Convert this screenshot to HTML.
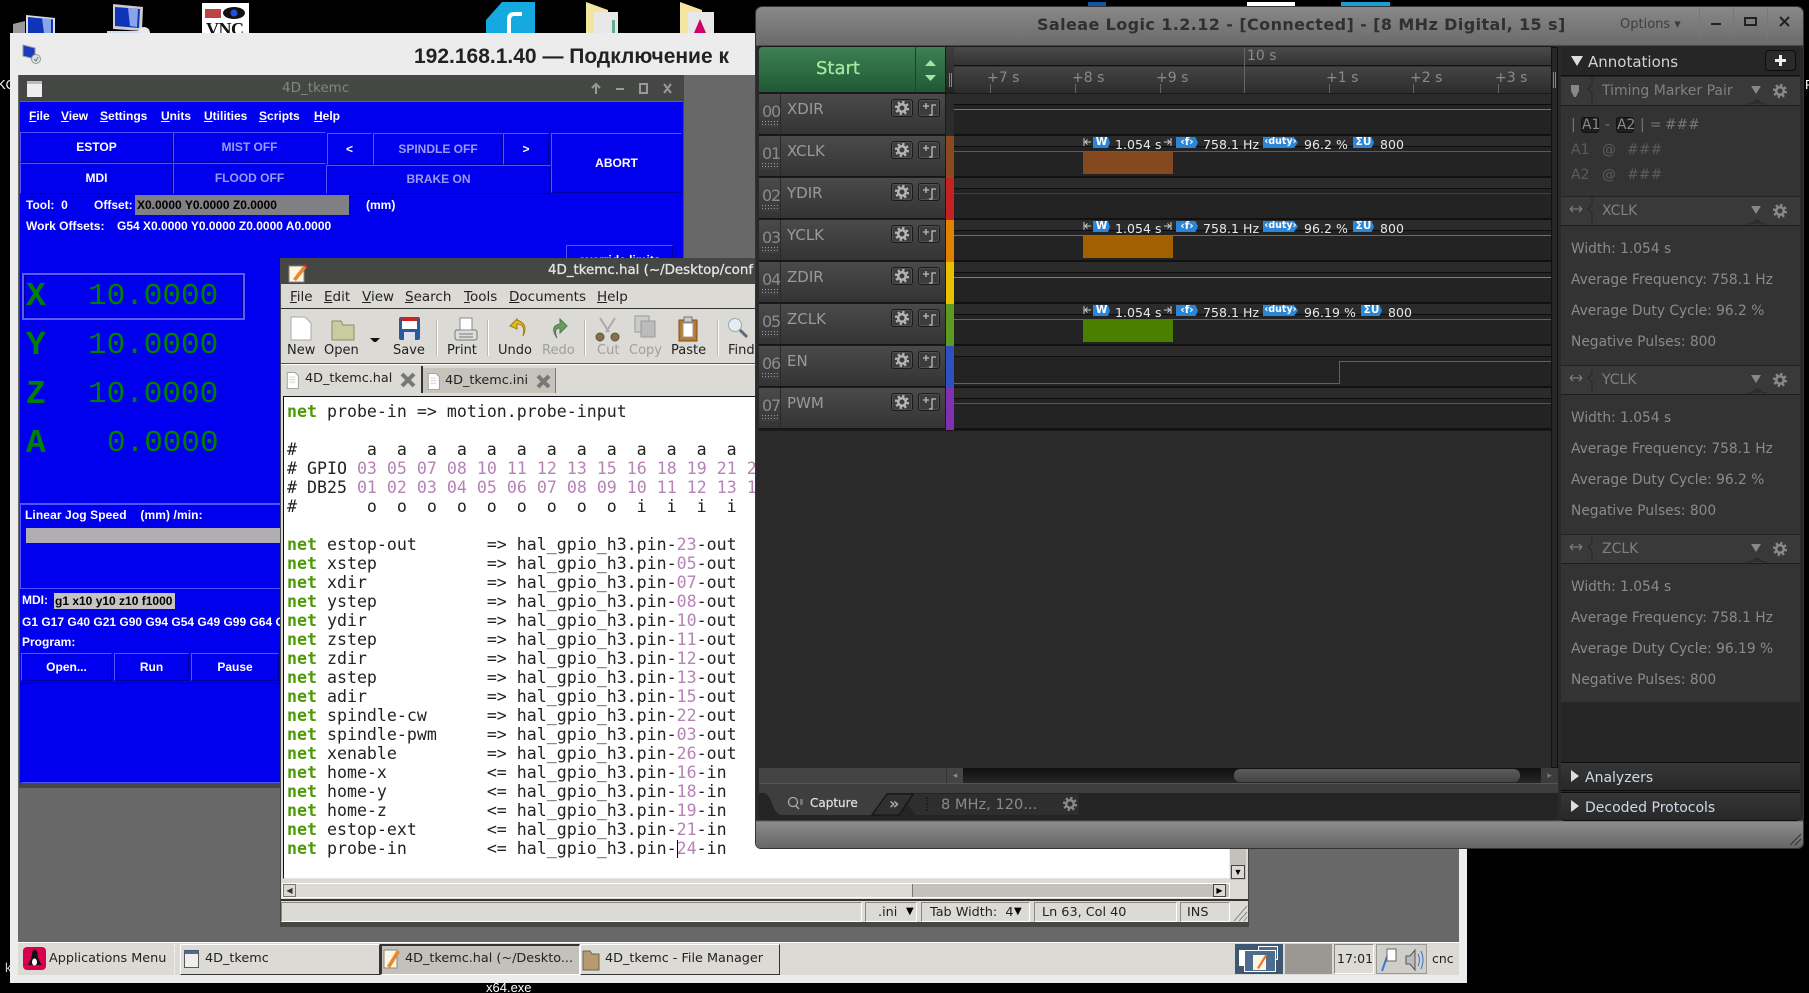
<!DOCTYPE html>
<html><head><meta charset="utf-8"><title>Saleae Logic</title>
<style>
html,body{margin:0;padding:0;background:#000;width:1809px;height:993px;overflow:hidden}
div,span,pre,svg,b,i{position:absolute;box-sizing:border-box}
#r{left:0;top:0;width:1809px;height:993px;overflow:hidden;font-family:"Liberation Sans",sans-serif}
#r span{white-space:nowrap}
u{position:static}
.bt{background:#0000ee;border:1px solid;border-color:#5454ff #00009c #00009c #5454ff;color:#fff;font:bold 12px "Liberation Sans",sans-serif;text-align:center}
.gy{color:#9a9af5!important}
.w{color:#fff;font:bold 12px "Liberation Sans",sans-serif}
.dro{font:31px/36px "Liberation Mono",monospace;color:#008000;white-space:pre!important}
.drb{font-weight:bold;font-size:33px}
.gm{font:13.5px "DejaVu Sans",sans-serif;color:#222}
.tl{font:13px "DejaVu Sans",sans-serif;color:#222;top:343px}
.dis{color:#a09e99}
.sep{width:2px;background:#bdbab4;border-right:1px solid #fff;top:320px;height:36px}
#code{left:287px;top:402px;margin:0;font:16.6px/19px "DejaVu Sans Mono",monospace;color:#222;white-space:pre}
#code b{position:static;color:#4e9a06;font-weight:bold}
#code i{position:static;font-style:normal;color:#b583b5}
.sb{background:#dcdad5;border:1px solid;border-color:#8a8984 #fff #fff #8a8984;top:902px;height:20px}
.sb2{font:12.8px "DejaVu Sans",sans-serif;color:#222;top:905px}
.tb{top:944px;height:31px;background:#dcdad5;border:1px solid;border-color:#fff #333 #333 #fff}
.ts{font:12.8px "DejaVu Sans",sans-serif;color:#222;top:951px}
.ch{left:759px;width:186px;height:41px;background:linear-gradient(#4a4a4a,#343434);border-bottom:1px solid #151515}
.ch:before{content:"";position:absolute;left:21px;top:0;bottom:0;width:1px;background:#2a2a2a}
.ch .n{left:3px;top:8px;font:16px "DejaVu Sans",sans-serif;color:#8b8b8b;letter-spacing:-1.2px}
.ch .nm{left:28px;top:6px;font:15px "DejaVu Sans",sans-serif;color:#9a9a9a}
.ch .dt{left:3px;top:27px;width:16px;height:6px;background:repeating-linear-gradient(90deg,transparent 0 1px,#3e3e3e 1px 3px),repeating-linear-gradient(#999 0 1px,#3e3e3e 1px 3px)}
.ch .b1,.ch .b2{top:5px;height:18px;width:22px;background:#3c3c3c;border:1px solid #1a1a1a;border-radius:3px;box-shadow:inset 0 0 0 1px #505050}
.ch .b1{left:132px;color:#b4b4b4}.ch .b2{left:159px}
.ch .b1 svg,.ch .b2 svg{left:2px;top:0}
.st{left:946px;width:8px;height:42px}
.wv{left:954px;width:597px;height:42px;background:#232323;border-bottom:2px solid #111}
.wv .t{left:0;top:0;width:100%;height:11px;background:#2b2b2b;border-bottom:1px solid #0e0e0e}
.wv .l{left:0;top:15px;width:100%;height:1px}
.tg{font:bold 10.5px/10px "DejaVu Sans",sans-serif;color:#fff;background:#2a86d8;height:11px;text-align:center;clip-path:polygon(0 0,88% 0,100% 50%,88% 100%,0 100%)}
.at{font:12.5px "DejaVu Sans",sans-serif;color:#e8e8e8;letter-spacing:.05px}
.rl{font:14px "DejaVu Sans",sans-serif;color:#8a8a8a;top:70px}
.tk{width:1px;background:#666;top:84px;height:9px}
.sh{left:1561px;width:239px;height:30px;background:#393939;border-bottom:1px solid #1c1c1c;border-top:1px solid #222}
.sh .h{left:41px;top:6px;font:14px "DejaVu Sans",sans-serif;color:#808080}
.sh .dn{left:190px;top:9px;width:0;height:0;border:5px solid transparent;border-top:8px solid #888;border-bottom:0}
.pt{font:13.8px "DejaVu Sans",sans-serif;color:#8a8a8a;left:1571px}
.pd{font:14px "DejaVu Sans",sans-serif;color:#5c5c5c}
</style></head><body><div id="r">
<svg width="0" height="0" style="left:0;top:0"><defs>
<g id="gear"><circle cx="8" cy="8" r="3.8" fill="none" stroke="currentColor" stroke-width="2.6"/><circle cx="8" cy="8" r="6" fill="none" stroke="currentColor" stroke-width="2.2" stroke-dasharray="2.36 2.35"/></g>
<g id="stp"><path d="M2 6h6M5 3v6M8 15h3V5h4" fill="none" stroke="#bbb" stroke-width="1.3"/></g>
<g id="doc"><path d="M1.500 .5h9l4 4v15h-13z" fill="#fff" stroke="#999"/><path d="M4 6h7M4 9h7M4 12h7" stroke="#ccc"/></g>
<g id="hd"><path d="M31 0V9L27 13 31 17V28" fill="none" stroke="#262626"/><path d="M186 28h4l6-4 6 4h4" fill="#303030" stroke="#262626"/></g>
<g id="dbl"><path d="M1 7h12M1 7l3-3M1 7l3 3M13 7l-3-3M13 7l-3 3" fill="none" stroke="#888"/></g>
<g id="wl"><path d="M1 2v8M8 6H2M4.500 3.500L2 6l2.500 2.500" fill="none" stroke="#ccc"/></g>
<g id="wr"><path d="M7 2v8M0 6h6M3.500 3.500L6 6 3.500 8.500" fill="none" stroke="#ccc"/></g>
</defs></svg>

<!-- desktop icons -->
<svg style="left:0;top:0" width="800" height="34">
<path d="M13 24l12-3v12H13z" fill="#999"/><path d="M26 15l29 3v15H26z" fill="#ddd"/><path d="M28 17l25 2.500V33H28z" fill="#1034b8"/><path d="M42 18l9 1v14h-7z" fill="#8aa4e8"/>
<path d="M107 31h36v2h-36z" fill="#cde"/><path d="M113 4l30 3-1 24-29-2z" fill="#ccc"/><path d="M115 7l25 2-1 19-24-2z" fill="#1034b8"/><path d="M128 8l10 1-1 18-7-1z" fill="#8aa4e8"/><circle cx="144" cy="33" r="6" fill="#e8e8e8"/>
<rect x="202" y="3" width="47" height="31" fill="#fff"/><ellipse cx="234" cy="13" rx="11" ry="6" fill="#111"/><circle cx="234" cy="13" r="3.500" fill="#2050e0"/><rect x="205" y="9" width="16" height="9" fill="#b44"/>
<path d="M502 2h33v31h-49V20z" fill="#16a9e0"/><path d="M522 14h-8q-5 0-5 6v13" fill="none" stroke="#fff" stroke-width="4"/>
<path d="M586 2l22 8v23h-22z" fill="#f3e4a0"/><path d="M594 12h24v21h-24z" fill="#e8e8e8"/><path d="M612 20h3v13h-3z" fill="#6a9"/>
<path d="M680 2l22 8v23h-22z" fill="#f3e4a0"/><path d="M688 12h26v21h-26z" fill="#e8e8e8"/><path d="M694 33l6-14 6 14z" fill="#c06"/>
</svg>
<span style="left:206px;top:19px;font:bold 18px 'Liberation Serif',serif;color:#111;letter-spacing:-.5px">VNC</span>
<div style="left:1247px;top:2px;width:48px;height:6px;background:#fff"></div>
<div style="left:1341px;top:2px;width:49px;height:6px;background:#16a0d8"></div>
<div style="left:1088px;top:2px;width:18px;height:6px;background:#15a"></div>
<span style="left:-3px;top:77px;font-size:13px;color:#fff">KO</span>
<span style="left:5px;top:960px;font-size:13px;color:#ccd">k</span>
<span style="left:486px;top:980px;font-size:13px;color:#fff">x64.exe</span>
<span style="left:1805px;top:77px;font-size:13px;color:#fff">F</span>

<!-- VNC window -->
<div style="left:10px;top:33px;width:1457px;height:950px;background:#ececec"></div>
<div style="left:0;top:0;width:0;height:0"></div>
<svg style="left:22px;top:44px" width="20" height="22"><path d="M1 1l12 3v11L1 12z" fill="#1c3cc0" stroke="#999"/><circle cx="14" cy="15" r="4.500" fill="#dde" stroke="#999"/><path d="M12 15l2 2 2-4" stroke="#3a3" fill="none"/></svg>
<span style="left:414px;top:45px;font:bold 21px 'Liberation Sans',sans-serif;color:#222">192.168.1.40 — Подключение к</span>
<div style="left:18px;top:75px;width:1441px;height:868px;background:#686868"></div>

<!-- 4D_tkemc -->
<div style="left:19px;top:75px;width:665px;height:713px;background:#454745"></div>
<div style="left:27px;top:81px;width:15px;height:16px;background:#eee;border-top:3px solid #bbb"></div>
<span style="left:282px;top:80px;font:13.5px 'DejaVu Sans',sans-serif;color:#848684">4D_tkemc</span>
<svg style="left:585px;top:80px" width="92" height="16" stroke="#999" fill="none" stroke-width="2"><path d="M11 14V4M7 8l4-4 4 4M31 9h8M55 4h7v9h-7zM79 4l7 9M86 4l-7 9"/></svg>
<div style="left:20px;top:101px;width:663px;height:682px;background:#0000ee;border-top:1px solid #5454ff"></div>
<span class="w" style="left:29px;top:109px"><u>F</u>ile</span><span class="w" style="left:61px;top:109px"><u>V</u>iew</span><span class="w" style="left:100px;top:109px"><u>S</u>ettings</span><span class="w" style="left:161px;top:109px"><u>U</u>nits</span><span class="w" style="left:204px;top:109px"><u>U</u>tilities</span><span class="w" style="left:259px;top:109px"><u>S</u>cripts</span><span class="w" style="left:314px;top:109px"><u>H</u>elp</span>
<div class="bt" style="left:20px;top:132px;width:153px;height:31px;line-height:29px">ESTOP</div>
<div class="bt gy" style="left:173px;top:132px;width:153px;height:31px;line-height:29px">MIST OFF</div>
<div class="bt" style="left:327px;top:133px;width:45px;height:32px;line-height:30px">&lt;</div>
<div class="bt gy" style="left:373px;top:133px;width:130px;height:32px;line-height:30px">SPINDLE OFF</div>
<div class="bt" style="left:503px;top:133px;width:46px;height:32px;line-height:30px">&gt;</div>
<div class="bt" style="left:551px;top:133px;width:131px;height:60px;line-height:58px">ABORT</div>
<div class="bt" style="left:20px;top:163px;width:153px;height:31px;line-height:29px">MDI</div>
<div class="bt gy" style="left:173px;top:163px;width:153px;height:31px;line-height:29px">FLOOD OFF</div>
<div class="bt gy" style="left:326px;top:165px;width:225px;height:29px;line-height:27px">BRAKE ON</div>
<span class="w" style="left:26px;top:198px">Tool:&nbsp; 0</span><span class="w" style="left:94px;top:198px">Offset:</span>
<div style="left:135px;top:195px;width:214px;height:20px;background:#807f84"></div>
<span class="w" style="left:137px;top:198px;color:#000">X0.0000 Y0.0000 Z0.0000</span>
<span class="w" style="left:366px;top:198px">(mm)</span>
<span class="w" style="left:26px;top:219px">Work Offsets:</span><span class="w" style="left:117px;top:219px">G54 X0.0000 Y0.0000 Z0.0000 A0.0000</span>
<div class="bt" style="left:566px;top:245px;width:107px;height:30px;line-height:28px">override limits</div>
<div style="left:22px;top:273px;width:223px;height:47px;border:2px solid #5a5aff;outline:1px solid #00009c;outline-offset:-3px"></div>
<span class="dro drb" style="left:26px;top:279px">X</span><span class="dro" style="left:88px;top:279px">10.0000</span>
<span class="dro drb" style="left:26px;top:328px">Y</span><span class="dro" style="left:88px;top:328px">10.0000</span>
<span class="dro drb" style="left:26px;top:377px">Z</span><span class="dro" style="left:88px;top:377px">10.0000</span>
<span class="dro drb" style="left:26px;top:426px">A</span><span class="dro" style="left:107px;top:426px">0.0000</span>
<div style="left:20px;top:503px;width:270px;height:86px;border:1px solid;border-color:#5454ff #00009c #5454ff #5454ff;border-top-width:2px"></div>
<span class="w" style="left:25px;top:508px;letter-spacing:.1px">Linear Jog Speed &nbsp;&nbsp;&nbsp;(mm) /min:</span>
<div style="left:26px;top:528px;width:256px;height:15px;background:#b0aeb2"></div>
<span class="w" style="left:22px;top:593px">MDI:</span>
<div style="left:54px;top:593px;width:121px;height:16px;background:#c4c4c4"></div>
<span class="w" style="left:55px;top:594px;color:#000">g1 x10 y10 z10 f1000</span>
<span class="w" style="left:22px;top:615px">G1 G17 G40 G21 G90 G94 G54 G49 G99 G64 G</span>
<span class="w" style="left:22px;top:635px">Program:</span>
<div class="bt" style="left:21px;top:653px;width:91px;height:28px;line-height:26px">Open...</div>
<div class="bt" style="left:114px;top:653px;width:75px;height:28px;line-height:26px">Run</div>
<div class="bt" style="left:191px;top:653px;width:88px;height:28px;line-height:26px">Pause</div>
<div style="left:21px;top:683px;width:270px;height:100px;border:1px solid;border-color:#00009c #0000ee #5454ff #00009c"></div>

<!-- gedit -->
<div style="left:280px;top:258px;width:969px;height:669px;background:#454745"></div>
<svg style="left:287px;top:262px" width="22" height="22"><rect x="2" y="4" width="15" height="16" fill="#fdf5e0" stroke="#888"/><path d="M4 4v-2M8 4v-2M12 4v-2" stroke="#555"/><path d="M6 17L17 3l3 2-11 14z" fill="#e8872c"/><path d="M17 3l3 2" stroke="#d22" stroke-width="2"/></svg>
<span style="left:548px;top:263px;font:13.4px 'DejaVu Sans',sans-serif;color:#e4e4e4;-webkit-text-stroke:.3px #e4e4e4">4D_tkemc.hal (~/Desktop/conf</span>
<div style="left:281px;top:284px;width:967px;height:638px;background:#dcdad5"></div>
<div style="left:281px;top:308px;width:967px;height:1px;background:#333"></div>
<span class="gm" style="left:290px;top:289px"><u>F</u>ile</span><span class="gm" style="left:324px;top:289px"><u>E</u>dit</span><span class="gm" style="left:362px;top:289px"><u>V</u>iew</span><span class="gm" style="left:405px;top:289px"><u>S</u>earch</span><span class="gm" style="left:464px;top:289px"><u>T</u>ools</span><span class="gm" style="left:509px;top:289px"><u>D</u>ocuments</span><span class="gm" style="left:597px;top:289px"><u>H</u>elp</span>
<svg style="left:285px;top:312px" width="470" height="30">
<path d="M6 5h14l6 6v17H6z" fill="#fff" stroke="#aaa"/>
<path d="M47 9h9l2 4h11v15H47z" fill="#c8cda0" stroke="#8c8c6c"/>
<path d="M85 26h10l-5 5z" fill="#111"/>
<rect x="114" y="5" width="21" height="23" rx="2" fill="#2a5a9c"/><rect x="117" y="5" width="15" height="4" fill="#c22"/><rect x="117" y="9" width="15" height="8" fill="#fff"/><rect x="119" y="20" width="11" height="8" fill="#dde"/>
<rect x="170" y="18" width="22" height="10" rx="2" fill="#ddd" stroke="#777"/><rect x="175" y="6" width="12" height="12" fill="#fff" stroke="#888"/><path d="M174 22h14M174 25h14" stroke="#777"/>
<path d="M232 7l-7 7 7 3v-5q9 0 6 12 6-12-6-16z" fill="#e6b81e" stroke="#a07c10"/>
<path d="M275 7l7 7-7 7v-5q-7 0-3 10-8-12 3-14z" fill="#6a9c60" stroke="#4c7a4c"/>
<path d="M315 6l9 14M330 6l-9 14" stroke="#aaa" stroke-width="2"/><circle cx="315" cy="25" r="4" fill="#8a7040" stroke="#555"/><circle cx="330" cy="25" r="4" fill="#8a7040" stroke="#555"/>
<rect x="350" y="4" width="14" height="16" fill="#ccc" stroke="#999"/><rect x="356" y="9" width="14" height="16" fill="#bbb" stroke="#999"/>
<rect x="394" y="8" width="18" height="21" fill="#b87a30" stroke="#7a5020"/><rect x="398" y="11" width="10" height="14" fill="#fff" stroke="#999"/><rect x="399" y="5" width="8" height="5" fill="#ccc" stroke="#777"/>
<circle cx="450" cy="13" r="6.500" fill="#e4ecf4" stroke="#9aa"/><path d="M455 18l7 7" stroke="#667" stroke-width="3"/>
</svg>
<div class="sep" style="left:436px"></div><div class="sep" style="left:487px"></div><div class="sep" style="left:584px"></div><div class="sep" style="left:717px"></div>
<span class="tl" style="left:287px">New</span><span class="tl" style="left:324px">Open</span><span class="tl" style="left:393px">Save</span><span class="tl" style="left:447px">Print</span><span class="tl" style="left:498px">Undo</span><span class="tl dis" style="left:542px">Redo</span><span class="tl dis" style="left:597px">Cut</span><span class="tl dis" style="left:629px">Copy</span><span class="tl" style="left:671px">Paste</span><span class="tl" style="left:728px">Find</span>
<div style="left:281px;top:363px;width:967px;height:2px;background:#555;border-bottom:1px solid #fff"></div>
<div style="left:421px;top:366px;width:2px;height:27px;background:#333"></div>
<div style="left:423px;top:368px;width:133px;height:25px;background:#c6c3bd;border-right:1px solid #777"></div>
<svg style="left:286px;top:372px" width="15" height="20"><use href="#doc" transform="scale(.85)"/></svg>
<svg style="left:427px;top:373px" width="15" height="20"><use href="#doc" transform="scale(.85)"/></svg>
<span style="left:305px;top:371px;font:12.8px 'DejaVu Sans',sans-serif;color:#222">4D_tkemc.hal</span>
<span style="left:445px;top:373px;font:12.8px 'DejaVu Sans',sans-serif;color:#222">4D_tkemc.ini</span>
<svg style="left:400px;top:372px" width="16" height="16"><path d="M2 2l12 12M14 2L2 14" stroke="#777" stroke-width="4"/></svg>
<svg style="left:536px;top:374px" width="15" height="15"><path d="M2 2l11 11M13 2L2 13" stroke="#777" stroke-width="4"/></svg>
<div style="left:283px;top:396px;width:947px;height:483px;background:#fff;border:1px solid;border-color:#111 #eee #e4e4e4 #111"></div>
<pre id="code"><b>net</b> probe-in =&gt; motion.probe-input

#       a  a  a  a  a  a  a  a  a  a  a  a  a
# GPIO <i>03</i> <i>05</i> <i>07</i> <i>08</i> <i>10</i> <i>11</i> <i>12</i> <i>13</i> <i>15</i> <i>16</i> <i>18</i> <i>19</i> <i>21</i> <i>22</i>
# DB25 <i>01</i> <i>02</i> <i>03</i> <i>04</i> <i>05</i> <i>06</i> <i>07</i> <i>08</i> <i>09</i> <i>10</i> <i>11</i> <i>12</i> <i>13</i> <i>14</i>
#       o  o  o  o  o  o  o  o  o  i  i  i  i

<b>net</b> estop-out       =&gt; hal_gpio_h3.pin-<i>23</i>-out
<b>net</b> xstep           =&gt; hal_gpio_h3.pin-<i>05</i>-out
<b>net</b> xdir            =&gt; hal_gpio_h3.pin-<i>07</i>-out
<b>net</b> ystep           =&gt; hal_gpio_h3.pin-<i>08</i>-out
<b>net</b> ydir            =&gt; hal_gpio_h3.pin-<i>10</i>-out
<b>net</b> zstep           =&gt; hal_gpio_h3.pin-<i>11</i>-out
<b>net</b> zdir            =&gt; hal_gpio_h3.pin-<i>12</i>-out
<b>net</b> astep           =&gt; hal_gpio_h3.pin-<i>13</i>-out
<b>net</b> adir            =&gt; hal_gpio_h3.pin-<i>15</i>-out
<b>net</b> spindle-cw      =&gt; hal_gpio_h3.pin-<i>22</i>-out
<b>net</b> spindle-pwm     =&gt; hal_gpio_h3.pin-<i>03</i>-out
<b>net</b> xenable         =&gt; hal_gpio_h3.pin-<i>26</i>-out
<b>net</b> home-x          &lt;= hal_gpio_h3.pin-<i>16</i>-in
<b>net</b> home-y          &lt;= hal_gpio_h3.pin-<i>18</i>-in
<b>net</b> home-z          &lt;= hal_gpio_h3.pin-<i>19</i>-in
<b>net</b> estop-ext       &lt;= hal_gpio_h3.pin-<i>21</i>-in
<b>net</b> probe-in        &lt;= hal_gpio_h3.pin-<i>24</i>-in</pre>
<div style="left:677px;top:840px;width:1px;height:18px;background:#000"></div>
<div style="left:1230px;top:396px;width:16px;height:484px;background:#c4c1bb"></div>
<div style="left:1231px;top:865px;width:14px;height:14px;background:#dcdad5;border:1px solid #444;color:#000;font-size:9px;line-height:12px;text-align:center">▼</div>
<div style="left:282px;top:883px;width:948px;height:15px;background:#c4c1bb;border:1px solid #fff"></div>
<div style="left:283px;top:884px;width:13px;height:13px;background:#dcdad5;border:1px solid #777;font-size:8px;line-height:11px;color:#333;text-align:center">◀</div>
<div style="left:296px;top:884px;width:617px;height:13px;background:#dcdad5;border-right:1px solid #777"></div>
<div style="left:1213px;top:884px;width:13px;height:13px;background:#dcdad5;border:1px solid #444;font-size:8px;line-height:11px;color:#000;text-align:center">▶</div>
<div style="left:281px;top:899px;width:967px;height:2px;background:#333"></div>
<div class="sb" style="left:281px;width:581px"></div><div class="sb" style="left:865px;width:52px"></div><div class="sb" style="left:921px;width:109px"></div><div class="sb" style="left:1034px;width:143px"></div><div class="sb" style="left:1180px;width:50px"></div>
<span class="sb2" style="left:878px">.ini</span><span class="sb2" style="left:906px;font-size:10px;top:906px;color:#000">▼</span><span class="sb2" style="left:930px">Tab Width:&nbsp; 4</span><span class="sb2" style="left:1014px;font-size:10px;top:906px;color:#000">▼</span><span class="sb2" style="left:1042px">Ln 63, Col 40</span><span class="sb2" style="left:1187px">INS</span>
<svg style="left:1231px;top:904px" width="17" height="18" stroke="#888"><path d="M3 17L16 2M8 17l8-9M13 17l3-4"/></svg>

<!-- taskbar -->
<div style="left:18px;top:942px;width:1441px;height:33px;background:#dcdad5;border-top:1px solid #fff"></div>
<svg style="left:23px;top:947px" width="24" height="24"><rect width="23" height="23" rx="4" fill="#d8004e"/><path d="M11.500 3q3 0 3 4 0 3 2 7l2 4H5l2-4q2-4 2-7 0-4 2.500-4z" fill="#111"/><ellipse cx="11.500" cy="15" rx="2.500" ry="3.500" fill="#fff"/></svg>
<span class="ts" style="left:49px">Applications Menu</span>
<div style="left:174px;top:944px;width:2px;height:30px;border-left:1px dotted #fff"></div>
<div class="tb" style="left:180px;width:200px"></div>
<svg style="left:184px;top:950px" width="15" height="18"><rect x=".5" y=".5" width="14" height="17" fill="#eee" stroke="#556"/><rect x="1" y="1" width="13" height="3" fill="#4c6c98"/></svg>
<span class="ts" style="left:205px">4D_tkemc</span>
<div class="tb" style="left:380px;width:200px;background:#c4c1bb;border-color:#333 #fff #fff #333;border-width:2px 1px 1px 2px"></div>
<svg style="left:383px;top:947px" width="18" height="24"><rect x="1" y="3" width="13" height="18" fill="#fdf5e0" stroke="#888"/><path d="M4 19L14 3l3 2L7 21z" fill="#e8872c"/></svg>
<span class="ts" style="left:405px">4D_tkemc.hal (~/Deskto...</span>
<div class="tb" style="left:580px;width:200px"></div>
<svg style="left:582px;top:948px" width="18" height="23"><path d="M1 3h7l2 3h7v16H1z" fill="#b89a70" stroke="#665"/></svg>
<span class="ts" style="left:605px">4D_tkemc - File Manager</span>
<div style="left:1235px;top:944px;width:48px;height:30px;background:#3e5872"></div>
<div style="left:1239px;top:950px;width:16px;height:16px;background:#fff"></div>
<div style="left:1258px;top:946px;width:20px;height:14px;background:#4c6c90;border:1px solid #fff"></div>
<div style="left:1244px;top:950px;width:32px;height:22px;background:#4c6c90;border:1px solid #fff"></div>
<svg style="left:1251px;top:952px" width="20" height="20"><rect x="2" y="3" width="13" height="15" fill="#fdf5e0"/><path d="M6 16L14 3l2 1-8 13z" fill="#e8772c"/></svg>
<div style="left:1285px;top:944px;width:47px;height:30px;background:#9a9891"></div>
<div style="left:1334px;top:944px;width:40px;height:30px;border:1px solid;border-color:#888 #fff #fff #888"></div>
<span class="ts" style="left:1337px;font-size:12.5px">17:01</span>
<div style="left:1376px;top:944px;width:51px;height:30px;background:#d0cec8;border:1px solid #999"></div>
<svg style="left:1379px;top:946px" width="46" height="27"><path d="M3 25L9 8" stroke="#3a78c8" stroke-width="2"/><rect x="8" y="3" width="9" height="12" fill="#fff" stroke="#666"/><path d="M27 10h4l5-6v20l-5-6h-4z" fill="#bbb" stroke="#555"/><path d="M39 8q3 6 0 12M42 5q4 9 0 18" fill="none" stroke="#3a78c8"/></svg>
<span class="ts" style="left:1432px;font-size:12.5px">cnc</span>

<!-- Saleae -->
<div style="left:756px;top:7px;width:1047px;height:841px;border-radius:6px 6px 5px 5px;background:linear-gradient(#888 0,#6b6b6b 38px,#2a2a2a 39px,#2a2a2a 813px,#8c8c8c 815px,#666 100%);box-shadow:0 0 0 1px #333"></div>
<span style="left:1037px;top:15px;font:bold 16px 'DejaVu Sans',sans-serif;color:#303030;letter-spacing:.4px">Saleae Logic 1.2.12 - [Connected] - [8 MHz Digital, 15 s]</span>
<span style="left:1620px;top:17px;font:13px 'DejaVu Sans',sans-serif;color:#3e3e3e">Options ▾</span>
<div style="left:1699px;top:8px;width:1px;height:30px;background:#777"></div><div style="left:1733px;top:8px;width:1px;height:30px;background:#777"></div><div style="left:1767px;top:8px;width:1px;height:30px;background:#777"></div>
<svg style="left:1700px;top:12px" width="100" height="20" fill="none" stroke="#222" stroke-width="2"><path d="M11 12h10M45 6h11v7H45zM80 5l9 9M89 5l-9 9" /></svg>

<div style="left:759px;top:46px;width:794px;height:722px;background:#1a1a1a"></div>
<div style="left:759px;top:47px;width:186px;height:45px;background:linear-gradient(#3f8054,#1f5a34);border-radius:3px 0 0 0"></div>
<div style="left:915px;top:47px;width:1px;height:45px;background:#17472a"></div>
<span style="left:816px;top:58px;font:18px 'DejaVu Sans',sans-serif;color:#a8e8a0;-webkit-text-stroke:.25px #a8e8a0">Start</span>
<svg style="left:925px;top:60px" width="12" height="22"><path d="M5.500 0l5.500 6H0zM0 15h11l-5.500 6z" fill="#a8e0a8"/></svg>
<div style="left:946px;top:47px;width:605px;height:45px;background:linear-gradient(#3e3e3e,#252525)"></div>
<div style="left:954px;top:47px;width:597px;height:19px;background:linear-gradient(#4a4a4a,#333);border-bottom:1px solid #111"></div>
<div style="left:954px;top:67px;width:597px;height:26px;background:linear-gradient(#444,#2c2c2c)"></div>
<div style="left:949px;top:73px;width:3px;height:14px;border-left:1px solid #888;border-right:1px solid #888"></div>
<div style="left:1244px;top:48px;width:1px;height:45px;background:#666"></div>
<span style="left:1247px;top:48px;font:14px 'DejaVu Sans',sans-serif;color:#8a8a8a">10 s</span>
<span class="rl" style="left:987px">+7 s</span><span class="rl" style="left:1072px">+8 s</span><span class="rl" style="left:1156px">+9 s</span><span class="rl" style="left:1326px">+1 s</span><span class="rl" style="left:1410px">+2 s</span><span class="rl" style="left:1495px">+3 s</span>
<div class="tk" style="left:990px"></div><div class="tk" style="left:1075px"></div><div class="tk" style="left:1160px"></div><div class="tk" style="left:1329px"></div><div class="tk" style="left:1413px"></div><div class="tk" style="left:1498px"></div>

<div class="ch" style="top:94px"><span class="n">00</span><i class="dt"></i><span class="nm">XDIR</span><div class="b1"><svg width="16" height="16"><use href="#gear"/></svg></div><div class="b2"><svg width="16" height="16"><use href="#stp"/></svg></div></div>
<div class="ch" style="top:136px"><span class="n">01</span><i class="dt"></i><span class="nm">XCLK</span><div class="b1"><svg width="16" height="16"><use href="#gear"/></svg></div><div class="b2"><svg width="16" height="16"><use href="#stp"/></svg></div></div>
<div class="ch" style="top:178px"><span class="n">02</span><i class="dt"></i><span class="nm">YDIR</span><div class="b1"><svg width="16" height="16"><use href="#gear"/></svg></div><div class="b2"><svg width="16" height="16"><use href="#stp"/></svg></div></div>
<div class="ch" style="top:220px"><span class="n">03</span><i class="dt"></i><span class="nm">YCLK</span><div class="b1"><svg width="16" height="16"><use href="#gear"/></svg></div><div class="b2"><svg width="16" height="16"><use href="#stp"/></svg></div></div>
<div class="ch" style="top:262px"><span class="n">04</span><i class="dt"></i><span class="nm">ZDIR</span><div class="b1"><svg width="16" height="16"><use href="#gear"/></svg></div><div class="b2"><svg width="16" height="16"><use href="#stp"/></svg></div></div>
<div class="ch" style="top:304px"><span class="n">05</span><i class="dt"></i><span class="nm">ZCLK</span><div class="b1"><svg width="16" height="16"><use href="#gear"/></svg></div><div class="b2"><svg width="16" height="16"><use href="#stp"/></svg></div></div>
<div class="ch" style="top:346px"><span class="n">06</span><i class="dt"></i><span class="nm">EN</span><div class="b1"><svg width="16" height="16"><use href="#gear"/></svg></div><div class="b2"><svg width="16" height="16"><use href="#stp"/></svg></div></div>
<div class="ch" style="top:388px"><span class="n">07</span><i class="dt"></i><span class="nm">PWM</span><div class="b1"><svg width="16" height="16"><use href="#gear"/></svg></div><div class="b2"><svg width="16" height="16"><use href="#stp"/></svg></div></div>

<div class="st" style="top:94px;background:#2c2c2c"></div><div class="st" style="top:136px;background:#8a4a20"></div><div class="st" style="top:178px;background:#c42222"></div><div class="st" style="top:220px;background:#e08200"></div><div class="st" style="top:262px;background:#e8c000"></div><div class="st" style="top:304px;background:#5c9a20"></div><div class="st" style="top:346px;background:#3050c0"></div><div class="st" style="top:388px;background:#8030b0"></div>

<div class="wv" style="top:94px"><i class="t"></i><i class="l" style="background:#777"></i></div>
<div class="wv" style="top:136px"><i class="t"></i><i class="l" style="background:#8a5024"></i></div>
<div class="wv" style="top:178px"><i class="t"></i><i class="l" style="background:#8a1c2c"></i></div>
<div class="wv" style="top:220px"><i class="t"></i><i class="l" style="background:#a86400"></i></div>
<div class="wv" style="top:262px"><i class="t"></i><i class="l" style="background:#a08010"></i></div>
<div class="wv" style="top:304px"><i class="t"></i><i class="l" style="background:#4c8000"></i></div>
<div class="wv" style="top:346px"><i class="t"></i></div>
<div class="wv" style="top:388px"><i class="t"></i><i class="l" style="background:#7a30a8"></i></div>
<div style="left:1083px;top:152px;width:90px;height:22px;background:#84491e"></div>
<div style="left:1083px;top:236px;width:90px;height:22px;background:#a36000"></div>
<div style="left:1083px;top:320px;width:90px;height:22px;background:#4a8000"></div>
<svg style="left:954px;top:355px" width="597" height="30" fill="none" stroke="#3a66ac"><path d="M0 28.500H385.500V6.500H597"/></svg>

<svg style="left:1083px;top:136px" width="10" height="12"><use href="#wl"/></svg><div class="tg" style="left:1093px;width:17px;top:137px">W</div><span class="at" style="left:1115px;top:137px">1.054 s</span><svg style="left:1164px;top:136px" width="10" height="12"><use href="#wr"/></svg><div class="tg" style="left:1176px;width:22px;top:137px">‹f›</div><span class="at" style="left:1203px;top:137px">758.1 Hz</span><div class="tg" style="left:1263px;width:35px;top:137px;font-size:9.5px">‹duty›</div><span class="at" style="left:1304px;top:137px">96.2 %</span><div class="tg" style="left:1353px;width:21px;top:137px">ΣU</div><span class="at" style="left:1380px;top:137px">800</span>
<svg style="left:1083px;top:220px" width="10" height="12"><use href="#wl"/></svg><div class="tg" style="left:1093px;width:17px;top:221px">W</div><span class="at" style="left:1115px;top:221px">1.054 s</span><svg style="left:1164px;top:220px" width="10" height="12"><use href="#wr"/></svg><div class="tg" style="left:1176px;width:22px;top:221px">‹f›</div><span class="at" style="left:1203px;top:221px">758.1 Hz</span><div class="tg" style="left:1263px;width:35px;top:221px;font-size:9.5px">‹duty›</div><span class="at" style="left:1304px;top:221px">96.2 %</span><div class="tg" style="left:1353px;width:21px;top:221px">ΣU</div><span class="at" style="left:1380px;top:221px">800</span>
<svg style="left:1083px;top:304px" width="10" height="12"><use href="#wl"/></svg><div class="tg" style="left:1093px;width:17px;top:305px">W</div><span class="at" style="left:1115px;top:305px">1.054 s</span><svg style="left:1164px;top:304px" width="10" height="12"><use href="#wr"/></svg><div class="tg" style="left:1176px;width:22px;top:305px">‹f›</div><span class="at" style="left:1203px;top:305px">758.1 Hz</span><div class="tg" style="left:1263px;width:35px;top:305px;font-size:9.5px">‹duty›</div><span class="at" style="left:1304px;top:305px">96.19 %</span><div class="tg" style="left:1361px;width:21px;top:305px">ΣU</div><span class="at" style="left:1388px;top:305px">800</span>

<div style="left:759px;top:431px;width:792px;height:337px;background:#2a2a2a"></div>
<div style="left:1551px;top:47px;width:7px;height:721px;background:#262626;border:1px solid #111"></div>
<div style="left:1553px;top:72px;width:3px;height:16px;border-left:1px solid #888;border-right:1px solid #888"></div>
<div style="left:759px;top:768px;width:187px;height:15px;background:#444"></div>
<div style="left:946px;top:768px;width:612px;height:15px;background:linear-gradient(#0f0f0f,#262626)"></div>
<div style="left:946px;top:768px;width:17px;height:15px;background:#444;border-left:1px solid #333;color:#888;font-size:9px;line-height:15px;text-align:center">◂</div>
<div style="left:1541px;top:768px;width:17px;height:15px;background:#3c3c3c;color:#777;font-size:9px;line-height:15px;text-align:center">▸</div>
<div style="left:1234px;top:769px;width:286px;height:13px;border-radius:6px;background:linear-gradient(#5c5c5c,#444)"></div>
<div style="left:759px;top:783px;width:799px;height:10px;background:#3e3e3e;border-top:1px solid #555"></div>
<div style="left:759px;top:793px;width:799px;height:27px;background:#242424;border-radius:0 0 4px 4px"></div>
<svg style="left:759px;top:793px" width="320" height="24"><path d="M6 0q4 2 7 10 3 10 9 12H112L128 0z" fill="#3e3e3e"/><path d="M113 22L128 1h26l-14 21z" fill="#303030" stroke="#111"/><path d="M155 1H330v21H158q-2 0-3-2l-6-8z" fill="#2e2e2e"/><path d="M168 4v15" stroke="#111" stroke-dasharray="2 1"/><circle cx="34" cy="9" r="4.500" fill="none" stroke="#aaa" stroke-width="1.300"/><path d="M37 13l3 3" stroke="#aaa" stroke-width="1.500"/><path d="M41 7h3M41 9h3M41 11h3" stroke="#aaa"/></svg>
<span style="left:810px;top:796px;font:12px 'DejaVu Sans',sans-serif;color:#e0e0e0;-webkit-text-stroke:.2px #e0e0e0">Capture</span>
<span style="left:889px;top:794px;font:bold 16px 'DejaVu Sans',sans-serif;color:#aaa">»</span>
<span style="left:941px;top:796px;font:14.6px 'DejaVu Sans',sans-serif;color:#8a8a8a">8 MHz, 120...</span>
<svg style="left:1062px;top:796px;color:#888" width="16" height="16"><use href="#gear"/></svg>
<svg style="left:1788px;top:832px" width="14" height="14" stroke="#333"><path d="M2 13L13 2M7 13l6-6"/></svg>

<!-- Right sidebar -->
<div style="left:1561px;top:46px;width:239px;height:716px;background:#262626"></div>
<div style="left:1561px;top:47px;width:239px;height:29px;background:#262626;border-bottom:1px solid #111"></div>
<svg style="left:1570px;top:55px" width="14" height="12"><path d="M1 1h12L7 11z" fill="#ddd"/></svg>
<span style="left:1588px;top:53px;font:15px 'DejaVu Sans',sans-serif;color:#ccd4da">Annotations</span>
<div style="left:1765px;top:50px;width:31px;height:21px;background:#2a2a2a;border:1px solid #0c0c0c;border-radius:4px"></div>
<svg style="left:1774px;top:54px" width="13" height="13"><path d="M6.500 1v11M1 6.500h11" stroke="#eee" stroke-width="3"/></svg>
<div style="left:1561px;top:76px;width:239px;height:626px;background:#333"></div>
<div class="sh" style="top:76px"><svg style="left:0;top:-1px" width="237" height="30"><use href="#hd"/><path d="M10 9h8v6l-3 6h-2l-3-6z" fill="#888"/></svg><span class="h">Timing Marker Pair</span><i class="dn"></i><svg style="left:211px;top:6px;color:#888" width="16" height="16"><use href="#gear"/></svg></div>
<span class="pt" style="left:1571px;top:117px;color:#7a7a7a">|</span>
<div style="left:1581px;top:117px;width:18px;height:16px;background:#1e1e1e;border-radius:3px;border:1px solid #111"></div><div style="left:1616px;top:117px;width:18px;height:16px;background:#1e1e1e;border-radius:3px;border:1px solid #111"></div>
<span class="pt" style="left:1582px;top:117px">A1</span><span class="pt" style="left:1605px;top:117px;color:#777">-</span><span class="pt" style="left:1617px;top:117px">A2</span><span class="pt" style="left:1640px;top:117px;color:#777">|</span><span class="pt" style="left:1650px;top:117px;color:#777">=</span><span class="pt" style="left:1665px;top:117px;color:#777">###</span>
<span class="pd" style="left:1571px;top:142px">A1</span><span class="pd" style="left:1602px;top:142px">@</span><span class="pd" style="left:1627px;top:142px">###</span><span class="pd" style="left:1571px;top:167px">A2</span><span class="pd" style="left:1602px;top:167px">@</span><span class="pd" style="left:1627px;top:167px">###</span>

<div class="sh" style="top:196px"><svg style="left:0;top:-1px" width="237" height="30"><use href="#hd"/><use href="#dbl" x="8" y="6"/></svg><span class="h">XCLK</span><i class="dn"></i><svg style="left:211px;top:6px;color:#888" width="16" height="16"><use href="#gear"/></svg></div>
<span class="pt" style="top:241px">Width: 1.054 s</span><span class="pt" style="top:272px">Average Frequency: 758.1 Hz</span><span class="pt" style="top:303px">Average Duty Cycle: 96.2 %</span><span class="pt" style="top:334px">Negative Pulses: 800</span>
<div class="sh" style="top:365px"><svg style="left:0;top:-1px" width="237" height="30"><use href="#hd"/><use href="#dbl" x="8" y="6"/></svg><span class="h">YCLK</span><i class="dn"></i><svg style="left:211px;top:6px;color:#888" width="16" height="16"><use href="#gear"/></svg></div>
<span class="pt" style="top:410px">Width: 1.054 s</span><span class="pt" style="top:441px">Average Frequency: 758.1 Hz</span><span class="pt" style="top:472px">Average Duty Cycle: 96.2 %</span><span class="pt" style="top:503px">Negative Pulses: 800</span>
<div class="sh" style="top:534px"><svg style="left:0;top:-1px" width="237" height="30"><use href="#hd"/><use href="#dbl" x="8" y="6"/></svg><span class="h">ZCLK</span><i class="dn"></i><svg style="left:211px;top:6px;color:#888" width="16" height="16"><use href="#gear"/></svg></div>
<span class="pt" style="top:579px">Width: 1.054 s</span><span class="pt" style="top:610px">Average Frequency: 758.1 Hz</span><span class="pt" style="top:641px">Average Duty Cycle: 96.19 %</span><span class="pt" style="top:672px">Negative Pulses: 800</span>

<div style="left:1561px;top:762px;width:239px;height:29px;background:linear-gradient(#363636,#282828);border-top:1px solid #0c0c0c;border-bottom:1px solid #0c0c0c"></div>
<div style="left:1561px;top:792px;width:239px;height:29px;background:linear-gradient(#363636,#282828);border-top:1px solid #0c0c0c;border-bottom:1px solid #0c0c0c;border-radius:0 0 4px 4px"></div>
<svg style="left:1571px;top:770px" width="9" height="48"><path d="M0 0l8 6-8 6zM0 30l8 6-8 6z" fill="#ddd"/></svg>
<span style="left:1585px;top:770px;font:14px 'DejaVu Sans',sans-serif;color:#cfd8e4">Analyzers</span>
<span style="left:1585px;top:800px;font:14px 'DejaVu Sans',sans-serif;color:#cfd8e4">Decoded Protocols</span>
</div></body></html>
